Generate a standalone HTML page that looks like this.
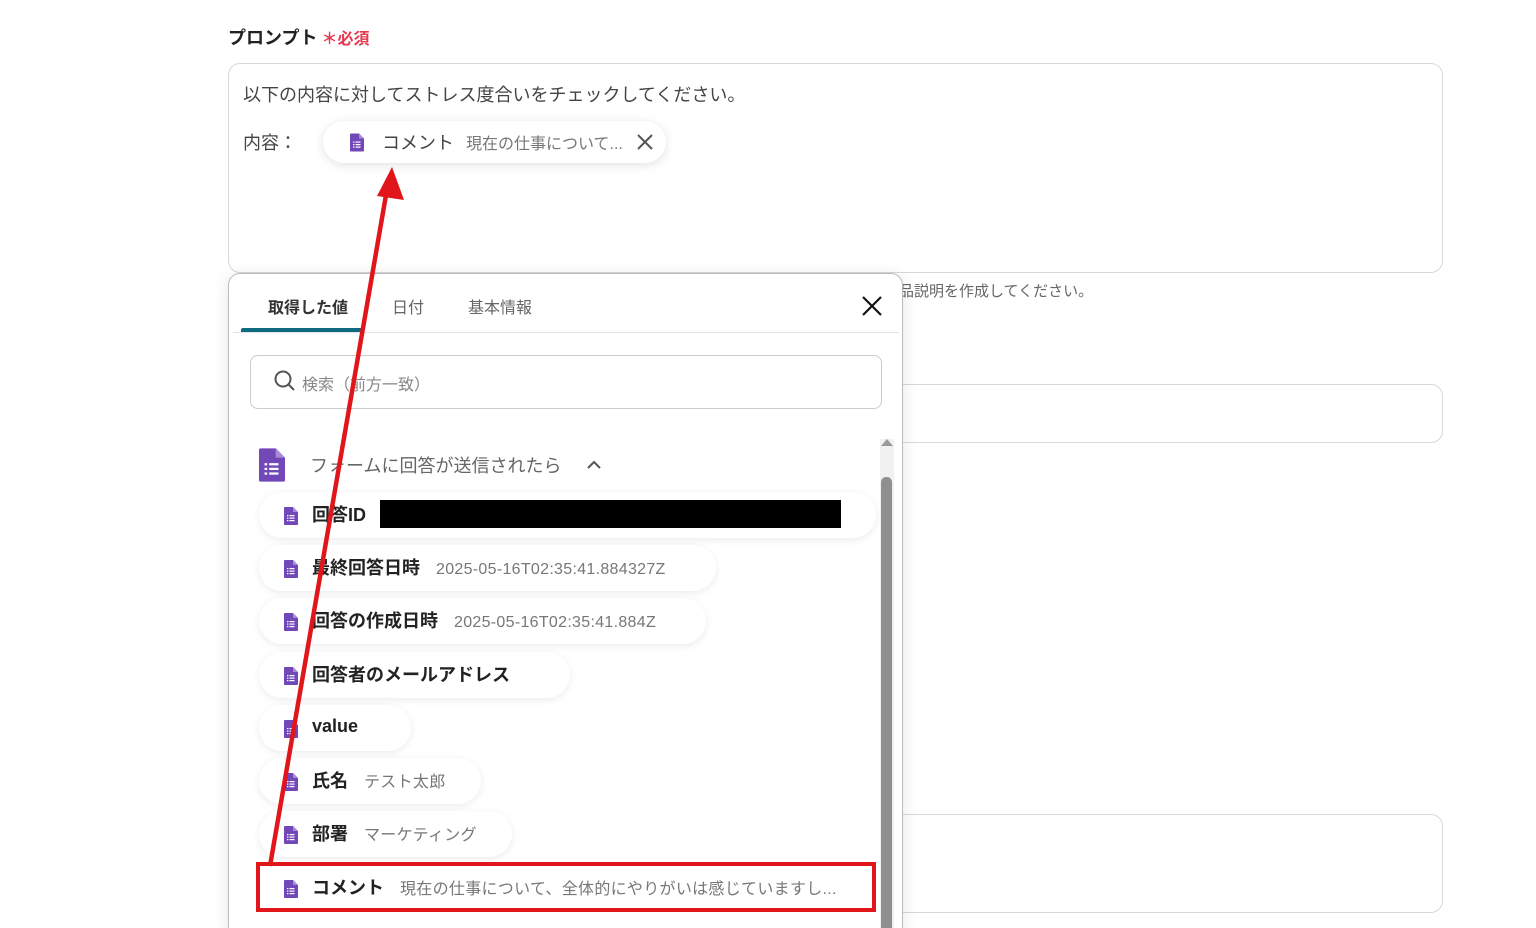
<!DOCTYPE html>
<html style="overflow:hidden;height:928px"><head><meta charset="utf-8"><style>
*{box-sizing:border-box;margin:0;padding:0}
body{width:1536px;height:928px;overflow:hidden;background:#fff;font-family:"Liberation Sans","Noto Sans CJK JP",sans-serif;position:relative;color:#333}
.a{position:absolute;white-space:nowrap}
.box{position:absolute;border:1px solid #d5d8de;border-radius:12px;background:#fff}
.pill{position:absolute;left:259px;height:46px;border-radius:23px;background:#fff;box-shadow:0 2px 8px rgba(0,0,0,.08)}
.pill .ic{position:absolute;left:25px;top:15px}
.pill .l{position:absolute;left:53px;top:9px;font-size:18px;font-weight:bold;color:#222}
.pill .v{font-weight:normal;font-size:16px;color:#777;margin-left:16px;letter-spacing:.3px}
</style></head><body>
<svg width="0" height="0" style="position:absolute"><defs>
<symbol id="doc" viewBox="0 0 14 18"><path d="M1 0h8l5 5v12a1 1 0 0 1-1 1H1a1 1 0 0 1-1-1V1a1 1 0 0 1 1-1z" fill="#7248b9"/><path d="M9 0v5h5z" fill="#a98ad8"/><g fill="#fff"><rect x="3" y="8" width="1.4" height="1.2"/><rect x="5.5" y="8" width="5" height="1.2"/><rect x="3" y="10.5" width="1.4" height="1.2"/><rect x="5.5" y="10.5" width="5" height="1.2"/><rect x="3" y="13" width="1.4" height="1.2"/><rect x="5.5" y="13" width="5" height="1.2"/></g></symbol>
</defs></svg>

<div class="a" style="left:228px;top:24px;font-size:18px;font-weight:bold;color:#222">プロンプト<span style="color:#e6394f;font-size:16px;margin-left:4px">＊必須</span></div>
<div class="box" style="left:228px;top:63px;width:1215px;height:210px"></div>
<div class="a" style="left:243px;top:81px;font-size:18px;color:#444">以下の内容に対してストレス度合いをチェックしてください。</div>
<div class="a" style="left:243px;top:129px;font-size:18px;color:#444">内容：</div>
<div class="a" style="left:323px;top:121px;width:343px;height:42px;border-radius:21px;background:#fff;box-shadow:0 2px 10px rgba(0,0,0,.12)">
<svg class="a" style="left:27px;top:12px" width="14" height="19"><use href="#doc"/></svg>
<span class="a" style="left:59px;top:8px;font-size:18px;color:#444">コメント<span style="font-size:16px;color:#777;margin-left:12px">現在の仕事について...</span></span>
<svg class="a" style="left:314px;top:13px" width="16" height="16"><path d="M1 1L15 15M15 1L1 15" stroke="#555" stroke-width="2"/></svg>
</div>
<div class="a" style="left:884px;top:280px;font-size:15px;color:#666">商品説明を作成してください。</div>
<div class="box" style="left:880px;top:384px;width:563px;height:59px"></div>
<div class="box" style="left:880px;top:814px;width:563px;height:99px"></div>

<div class="a" style="left:228px;top:273px;width:675px;height:670px;background:#fff;border:1px solid #bbb;border-radius:12px;box-shadow:0 2px 16px rgba(0,0,0,.1)">
<div class="a" style="left:39px;top:20px;font-size:16px;font-weight:bold;color:#333">取得した値</div>
<div class="a" style="left:163px;top:20px;font-size:16px;color:#666">日付</div>
<div class="a" style="left:239px;top:20px;font-size:16px;color:#666">基本情報</div>
<svg class="a" style="left:633px;top:22px" width="20" height="20"><path d="M1 1L19 19M19 1L1 19" stroke="#111" stroke-width="2.2"/></svg>
<div class="a" style="left:4px;top:58px;width:666px;height:1px;background:#e2e4e8"></div>
<div class="a" style="left:12px;top:54px;width:122px;height:4px;background:#0e6b7f;border-radius:2px 2px 0 0"></div>
<div class="a" style="left:21px;top:81px;width:632px;height:54px;border:1px solid #ccc;border-radius:8px"></div>
<svg class="a" style="left:45px;top:96px" width="22" height="22"><circle cx="9" cy="9" r="7.5" fill="none" stroke="#555" stroke-width="2"/><path d="M14.5 14.5L20 20" stroke="#555" stroke-width="2"/></svg>
<div class="a" style="left:73px;top:97px;font-size:16px;color:#888">検索（前方一致）</div>
<svg class="a" style="left:30px;top:174px" width="26" height="34" viewBox="0 0 14 18"><use href="#doc"/></svg>
<div class="a" style="left:81px;top:178px;font-size:18px;color:#666">フォームに回答が送信されたら</div>
<svg class="a" style="left:358px;top:186px" width="14" height="10"><path d="M1 8L7 2L13 8" fill="none" stroke="#555" stroke-width="2"/></svg>
<div class="a" style="left:651px;top:165px;width:14px;height:510px;background:#f1f1f1"></div>
<svg class="a" style="left:651px;top:162px" width="14" height="12"><path d="M1 10L7 3L13 10z" fill="#999"/></svg>
<div class="a" style="left:652px;top:203px;width:11px;height:470px;background:#8f8f8f;border-radius:5px 5px 0 0"></div>
</div>

<div class="pill" style="top:492px;width:617px"><svg class="ic" width="14" height="18"><use href="#doc"/></svg><div class="l">回答ID</div><div class="a" style="left:121px;top:8px;width:461px;height:28px;background:#000"></div></div>
<div class="pill" style="top:545px;width:457px"><svg class="ic" width="14" height="18"><use href="#doc"/></svg><div class="l">最終回答日時<span class="v">2025-05-16T02:35:41.884327Z</span></div></div>
<div class="pill" style="top:598px;width:447px"><svg class="ic" width="14" height="18"><use href="#doc"/></svg><div class="l">回答の作成日時<span class="v">2025-05-16T02:35:41.884Z</span></div></div>
<div class="pill" style="top:652px;width:311px"><svg class="ic" width="14" height="18"><use href="#doc"/></svg><div class="l">回答者のメールアドレス</div></div>
<div class="pill" style="top:705px;width:152px"><svg class="ic" width="14" height="18"><use href="#doc"/></svg><div class="l" style="top:11px">value</div></div>
<div class="pill" style="top:758px;width:222px"><svg class="ic" width="14" height="18"><use href="#doc"/></svg><div class="l">氏名<span class="v">テスト太郎</span></div></div>
<div class="pill" style="top:811px;width:253px"><svg class="ic" width="14" height="18"><use href="#doc"/></svg><div class="l">部署<span class="v">マーケティング</span></div></div>
<div class="pill" style="top:865px;width:610px;border-radius:0;box-shadow:none"><svg class="ic" width="14" height="18"><use href="#doc"/></svg><div class="l">コメント<span class="v">現在の仕事について、全体的にやりがいは感じていますし...</span></div></div>
<div class="a" style="left:256px;top:862px;width:620px;height:50px;border:4px solid #e0161b"></div>

<svg class="a" style="left:0;top:0" width="1536" height="928"><path d="M270 866L386 195" stroke="#e0161b" stroke-width="4.5"/><path d="M377 196L392 167L404 200z" fill="#e0161b"/></svg>
</body></html>
